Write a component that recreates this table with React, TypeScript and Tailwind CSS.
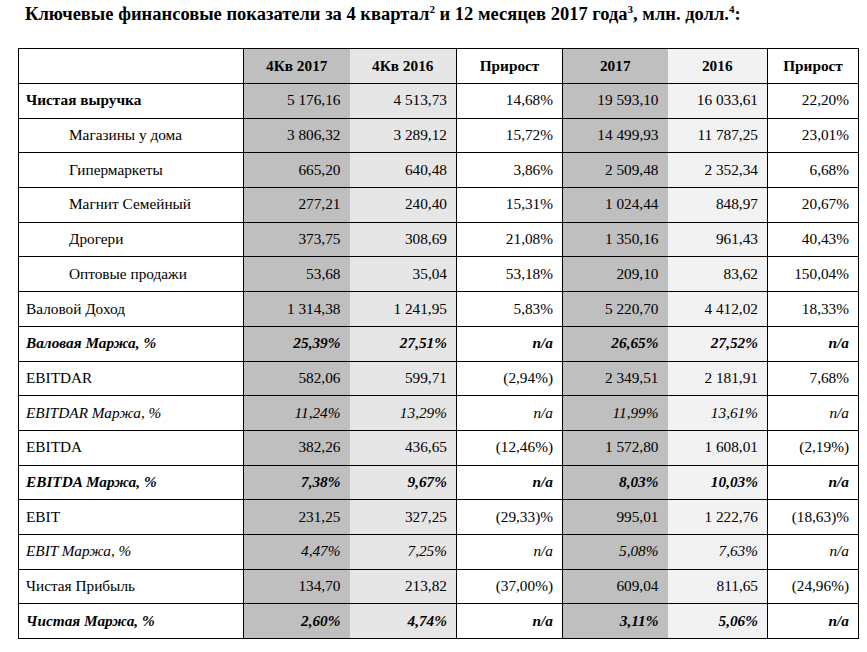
import React from "react";

type Row = {
  label: string;
  style?: "bold" | "indent" | "italic" | "bolditalic";
  values: string[];
};

const rows: Row[] = [
  { label: "Чистая выручка", style: "bold", values: ["5 176,16", "4 513,73", "14,68%", "19 593,10", "16 033,61", "22,20%"] },
  { label: "Магазины у дома", style: "indent", values: ["3 806,32", "3 289,12", "15,72%", "14 499,93", "11 787,25", "23,01%"] },
  { label: "Гипермаркеты", style: "indent", values: ["665,20", "640,48", "3,86%", "2 509,48", "2 352,34", "6,68%"] },
  { label: "Магнит Семейный", style: "indent", values: ["277,21", "240,40", "15,31%", "1 024,44", "848,97", "20,67%"] },
  { label: "Дрогери", style: "indent", values: ["373,75", "308,69", "21,08%", "1 350,16", "961,43", "40,43%"] },
  { label: "Оптовые продажи", style: "indent", values: ["53,68", "35,04", "53,18%", "209,10", "83,62", "150,04%"] },
  { label: "Валовой Доход", values: ["1 314,38", "1 241,95", "5,83%", "5 220,70", "4 412,02", "18,33%"] },
  { label: "Валовая Маржа, %", style: "bolditalic", values: ["25,39%", "27,51%", "n/a", "26,65%", "27,52%", "n/a"] },
  { label: "EBITDAR", values: ["582,06", "599,71", "(2,94%)", "2 349,51", "2 181,91", "7,68%"] },
  { label: "EBITDAR Маржа, %", style: "italic", values: ["11,24%", "13,29%", "n/a", "11,99%", "13,61%", "n/a"] },
  { label: "EBITDA", values: ["382,26", "436,65", "(12,46%)", "1 572,80", "1 608,01", "(2,19%)"] },
  { label: "EBITDA Маржа, %", style: "bolditalic", values: ["7,38%", "9,67%", "n/a", "8,03%", "10,03%", "n/a"] },
  { label: "EBIT", values: ["231,25", "327,25", "(29,33)%", "995,01", "1 222,76", "(18,63)%"] },
  { label: "EBIT Маржа, %", style: "italic", values: ["4,47%", "7,25%", "n/a", "5,08%", "7,63%", "n/a"] },
  { label: "Чистая Прибыль", values: ["134,70", "213,82", "(37,00%)", "609,04", "811,65", "(24,96%)"] },
  { label: "Чистая Маржа, %", style: "bolditalic", values: ["2,60%", "4,74%", "n/a", "3,11%", "5,06%", "n/a"] },
];

const headers = ["4Кв 2017", "4Кв 2016", "Прирост", "2017", "2016", "Прирост"];

// background + borders per data column
const colCls = [
  "bg-[#bfbfbf] border-l border-l-black",
  "bg-[#e6e6e6] border-r border-r-black",
  "bg-white border-r border-r-black",
  "bg-[#bfbfbf]",
  "bg-[#f2f2f2] border-r border-r-black",
  "bg-white",
];

export default function App() {
  return (
    <div className="w-[867px] h-[652px] bg-white text-black font-[family-name:Liberation_Serif,serif]">
      <h1 className="pl-[25px] pt-[2px] h-[48px] text-[18.5px] font-bold leading-[24px]">
        Ключевые финансовые показатели за 4 квартал<sup className="text-[11px] -top-[7px]">2</sup> и 12 месяцев 2017 года
        <sup className="text-[11px] -top-[7px]">3</sup>, млн. долл.<sup className="text-[11px] -top-[7px]">4</sup>:
      </h1>
      <table className="ml-[18px] w-[840px] table-fixed border-collapse border border-black text-[15.3px]">
        <colgroup>
          <col className="w-[225px]" />
          <col className="w-[106px]" />
          <col className="w-[107px]" />
          <col className="w-[106px]" />
          <col className="w-[105px]" />
          <col className="w-[100px]" />
          <col className="w-[91px]" />
        </colgroup>
        <thead>
          <tr className="h-[35px] border-b border-black">
            <th className="border-r border-black" />
            {headers.map((h, i) => (
              <th key={i} className={`font-bold text-center ${colCls[i]}`}>
                {h}
              </th>
            ))}
          </tr>
        </thead>
        <tbody>
          {rows.map((r, ri) => {
            const bold = r.style === "bold" || r.style === "bolditalic";
            const italic = r.style === "italic" || r.style === "bolditalic";
            return (
              <tr key={ri} className="h-[34.7px] border-b border-black">
                <td
                  className={`border-r border-black ${r.style === "indent" ? "pl-[50px]" : "pl-[7px]"} ${
                    bold ? "font-bold" : ""
                  } ${italic ? "italic" : ""}`}
                >
                  {r.label}
                </td>
                {r.values.map((v, i) => (
                  <td
                    key={i}
                    className={`text-right pr-[9px] ${colCls[i]} ${r.style === "bolditalic" ? "font-bold italic" : ""} ${
                      r.style === "italic" ? "italic" : ""
                    }`}
                  >
                    {v}
                  </td>
                ))}
              </tr>
            );
          })}
        </tbody>
      </table>
    </div>
  );
}
